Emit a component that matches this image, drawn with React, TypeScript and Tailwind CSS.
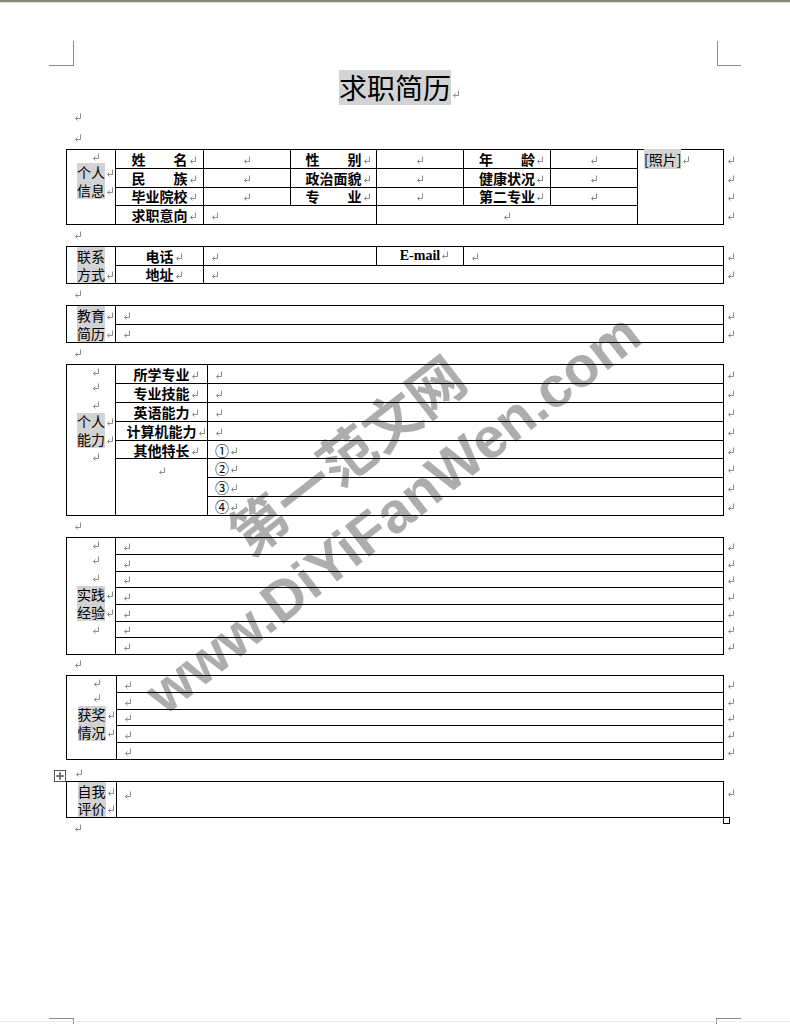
const Mark = ({ className = "" }: { className?: string }) => (
  <svg
    width="8"
    height="9"
    viewBox="0 0 8 9"
    fill="none"
    stroke="#8c8c8c"
    strokeWidth="1"
    className={`inline-block align-baseline ${className}`}
  >
    <path d="M6.5 0.5V5.5H1.5" />
    <path d="M3.5 3.5L1.5 5.5L3.5 7.5" />
  </svg>
);

// takes no width, so centred text ignores the mark the way Word does
const Tail = () => <Mark className="ml-[1px] mr-[-9px]" />;

const Spread = ({ a, b }: { a: string; b: string }) => (
  <span className="inline-flex w-[56px] justify-between font-bold">
    <span>{a}</span>
    <span>{b}</span>
  </span>
);

const Line = ({ cls, text, mark = true }: { cls: string; text?: string; mark?: boolean }) => (
  <div className={`${cls} text-center whitespace-nowrap`}>
    {text && <span className="inline-block bg-[#d3d3d3]">{text}</span>}
    {mark && <Tail />}
  </div>
);

const Para = ({ cls }: { cls: string }) => (
  <div className={`${cls} flex items-center pl-[74px]`}>
    <Mark />
  </div>
);

const End = ({ top = false }: { top?: boolean }) => (
  <td className={`pl-[3px] pr-0 py-0 ${top ? "align-top pt-[3px]" : "align-middle"}`}>
    <Mark />
  </td>
);

const side = "border border-black p-0 align-top";
const label = "border border-black p-0 text-center font-bold whitespace-nowrap";
const mid = "border border-black p-0 text-center";
const left = "border border-black py-0 pl-[7px] pr-0 text-left whitespace-nowrap";

const MoveHandle = () => (
  <svg width="12" height="12" viewBox="0 0 12 12">
    <rect x="0.5" y="0.5" width="11" height="11" fill="white" stroke="#555" />
    <path d="M6 3V9M3 6H9" stroke="#222" />
    <path d="M6 2L4.7 3.6H7.3Z M6 10L4.7 8.4H7.3Z M2 6L3.6 4.7V7.3Z M10 6L8.4 4.7V7.3Z" fill="#222" />
  </svg>
);

export default function App() {
  return (
    <div className="relative isolate h-[1024px] w-[790px] overflow-hidden bg-white font-['Noto_Sans_CJK_SC',sans-serif] text-black">
      <div className="h-[2px] bg-[#85857f]" />
      <div className="h-px bg-[#e2e2da]" />

      {/* watermark, behind the tables */}
      <div className="pointer-events-none absolute left-[369px] top-[483px] -z-10 flex -translate-x-1/2 -translate-y-1/2 -rotate-[38deg] flex-col items-center whitespace-nowrap font-bold text-[#adadad]">
        <div className="text-[56px] leading-[77px]">第一范文网</div>
        <div className="font-['Liberation_Sans',sans-serif] text-[57px] leading-[77px]">www.DiYiFanWen.com</div>
      </div>

      {/* page corner marks */}
      <div className="absolute left-[49px] top-[41px] h-[25px] w-[25px] border-b border-r border-[#8c8c8c]" />
      <div className="absolute left-[717px] top-[41px] h-[25px] w-[24px] border-b border-l border-[#8c8c8c]" />
      <div className="absolute left-[49px] top-[1018px] h-[6px] w-[25px] border-r border-t border-[#8c8c8c]" />
      <div className="absolute left-[716px] top-[1018px] h-[6px] w-[25px] border-l border-t border-[#8c8c8c]" />
      <div className="absolute left-0 top-[1021px] h-px w-full bg-[#ededed]" />

      <div className="h-[67px]" />
      <div className="h-[37px] text-center">
        <span className="inline-block h-[35px] bg-[#d3d3d3] text-[28px] leading-[35px]">求职简历</span>
        <Tail />
      </div>
      <Para cls="h-[21px]" />
      <Para cls="h-[21px]" />

      <div className="text-[14px] leading-[16px]">
        {/* 个人信息 */}
        <div className="pl-[66px]">
          <table className="w-[671px] table-fixed border-collapse">
            <colgroup>
              <col className="w-[49px]" />
              <col className="w-[88px]" />
              <col className="w-[87px]" />
              <col className="w-[86px]" />
              <col className="w-[87px]" />
              <col className="w-[87px]" />
              <col className="w-[87px]" />
              <col className="w-[86px]" />
              <col className="w-[14px]" />
            </colgroup>
            <tbody>
              <tr className="h-[18.75px]">
                <td rowSpan={4} className={side}>
                  <Line cls="h-[13px] leading-[13px]" />
                  <Line cls="h-[18px] leading-[18px]" text="个人" />
                  <Line cls="h-[18px] leading-[18px]" text="信息" />
                </td>
                <td className={label}><Spread a="姓" b="名" /><Tail /></td>
                <td className={mid}><Mark /></td>
                <td className={label}><Spread a="性" b="别" /><Tail /></td>
                <td className={mid}><Mark /></td>
                <td className={label}><Spread a="年" b="龄" /><Tail /></td>
                <td className={mid}><Mark /></td>
                <td rowSpan={4} className="border border-black py-0 pl-[6px] pr-0 align-top whitespace-nowrap leading-[18px]">
                  <span className="bg-[#d3d3d3]">[照片]</span>
                  <Mark className="ml-[1px]" />
                </td>
                <End />
              </tr>
              <tr className="h-[18.75px]">
                <td className={label}><Spread a="民" b="族" /><Tail /></td>
                <td className={mid}><Mark /></td>
                <td className={label}>政治面貌<Tail /></td>
                <td className={mid}><Mark /></td>
                <td className={label}>健康状况<Tail /></td>
                <td className={mid}><Mark /></td>
                <End />
              </tr>
              <tr className="h-[18.75px]">
                <td className={label}>毕业院校<Tail /></td>
                <td className={mid}><Mark /></td>
                <td className={label}><Spread a="专" b="业" /><Tail /></td>
                <td className={mid}><Mark /></td>
                <td className={label}>第二专业<Tail /></td>
                <td className={mid}><Mark /></td>
                <End />
              </tr>
              <tr className="h-[18.75px]">
                <td className={label}>求职意向<Tail /></td>
                <td colSpan={2} className={left}><Mark /></td>
                <td colSpan={3} className={mid}><Mark /></td>
                <End />
              </tr>
            </tbody>
          </table>
        </div>

        <Para cls="h-[21px]" />

        {/* 联系方式 */}
        <div className="pl-[66px]">
          <table className="w-[671px] table-fixed border-collapse">
            <colgroup>
              <col className="w-[49px]" />
              <col className="w-[88px]" />
              <col className="w-[173px]" />
              <col className="w-[87px]" />
              <col className="w-[260px]" />
              <col className="w-[14px]" />
            </colgroup>
            <tbody>
              <tr className="h-[18px]">
                <td rowSpan={2} className={side}>
                  <Line cls="h-[18px] leading-[18px]" text="联系" mark={false} />
                  <Line cls="h-[18px] leading-[18px]" text="方式" />
                </td>
                <td className={label}>电话<Tail /></td>
                <td className={left}><Mark /></td>
                <td className={`${label} font-['Liberation_Serif',serif]`}>E-mail<Tail /></td>
                <td className={left}><Mark /></td>
                <End />
              </tr>
              <tr className="h-[18px]">
                <td className={label}>地址<Tail /></td>
                <td colSpan={3} className={left}><Mark /></td>
                <End />
              </tr>
            </tbody>
          </table>
        </div>

        <Para cls="h-[21px]" />

        {/* 教育简历 */}
        <div className="pl-[66px]">
          <table className="w-[671px] table-fixed border-collapse">
            <colgroup>
              <col className="w-[49px]" />
              <col className="w-[608px]" />
              <col className="w-[14px]" />
            </colgroup>
            <tbody>
              <tr className="h-[18px]">
                <td rowSpan={2} className={side}>
                  <Line cls="h-[18px] leading-[18px]" text="教育" />
                  <Line cls="h-[18px] leading-[18px]" text="简历" />
                </td>
                <td className={left}><Mark /></td>
                <End />
              </tr>
              <tr className="h-[18px]">
                <td className={left}><Mark /></td>
                <End />
              </tr>
            </tbody>
          </table>
        </div>

        <Para cls="h-[21px]" />

        {/* 个人能力 */}
        <div className="pl-[66px]">
          <table className="w-[671px] table-fixed border-collapse">
            <colgroup>
              <col className="w-[49px]" />
              <col className="w-[92px]" />
              <col className="w-[516px]" />
              <col className="w-[14px]" />
            </colgroup>
            <tbody>
              <tr className="h-[18.9px]">
                <td rowSpan={8} className={side}>
                  <Line cls="h-[13px] leading-[13px]" />
                  <Line cls="h-[17.5px] leading-[17.5px]" />
                  <Line cls="h-[17.5px] leading-[17.5px]" />
                  <Line cls="h-[17.5px] leading-[17.5px]" text="个人" />
                  <Line cls="h-[17.5px] leading-[17.5px]" text="能力" />
                  <Line cls="h-[17.5px] leading-[17.5px]" />
                </td>
                <td className={label}>所学专业<Tail /></td>
                <td className={left}><Mark /></td>
                <End />
              </tr>
              <tr className="h-[18.9px]">
                <td className={label}>专业技能<Tail /></td>
                <td className={left}><Mark /></td>
                <End />
              </tr>
              <tr className="h-[18.9px]">
                <td className={label}>英语能力<Tail /></td>
                <td className={left}><Mark /></td>
                <End />
              </tr>
              <tr className="h-[18.9px]">
                <td className={label}>计算机能力<Tail /></td>
                <td className={left}><Mark /></td>
                <End />
              </tr>
              <tr className="h-[18.9px]">
                <td className={label}>其他特长<Tail /></td>
                <td className={left}>①<Mark className="ml-[1px]" /></td>
                <End />
              </tr>
              <tr className="h-[18.9px]">
                <td rowSpan={3} className={`${mid} align-top pt-[3px]`}><Mark /></td>
                <td className={left}>②<Mark className="ml-[1px]" /></td>
                <End />
              </tr>
              <tr className="h-[18.9px]">
                <td className={left}>③<Mark className="ml-[1px]" /></td>
                <End />
              </tr>
              <tr className="h-[18.9px]">
                <td className={left}>④<Mark className="ml-[1px]" /></td>
                <End />
              </tr>
            </tbody>
          </table>
        </div>

        <Para cls="h-[21px]" />

        {/* 实践经验 */}
        <div className="pl-[66px] leading-[14px]">
          <table className="w-[671px] table-fixed border-collapse">
            <colgroup>
              <col className="w-[49px]" />
              <col className="w-[608px]" />
              <col className="w-[14px]" />
            </colgroup>
            <tbody>
              <tr className="h-[16.7px]">
                <td rowSpan={7} className={side}>
                  <Line cls="h-[13px] leading-[13px]" />
                  <Line cls="h-[17.5px] leading-[17.5px]" />
                  <Line cls="h-[17.5px] leading-[17.5px]" />
                  <Line cls="h-[17.5px] leading-[17.5px]" text="实践" />
                  <Line cls="h-[17.5px] leading-[17.5px]" text="经验" />
                  <Line cls="h-[17.5px] leading-[17.5px]" />
                </td>
                <td className={left}><Mark /></td>
                <End />
              </tr>
              {[0, 1, 2, 3, 4, 5].map((i) => (
                <tr key={i} className="h-[16.7px]">
                  <td className={left}><Mark /></td>
                  <End />
                </tr>
              ))}
            </tbody>
          </table>
        </div>

        <Para cls="h-[20px]" />

        {/* 获奖情况 */}
        <div className="pl-[66px] leading-[14px]">
          <table className="w-[671px] table-fixed border-collapse">
            <colgroup>
              <col className="w-[50px]" />
              <col className="w-[607px]" />
              <col className="w-[14px]" />
            </colgroup>
            <tbody>
              <tr className="h-[16.8px]">
                <td rowSpan={5} className={side}>
                  <Line cls="h-[13px] leading-[13px]" />
                  <Line cls="h-[17.5px] leading-[17.5px]" />
                  <Line cls="h-[17.5px] leading-[17.5px]" text="获奖" />
                  <Line cls="h-[17.5px] leading-[17.5px]" text="情况" />
                </td>
                <td className={left}><Mark /></td>
                <End />
              </tr>
              {[0, 1, 2, 3].map((i) => (
                <tr key={i} className="h-[16.8px]">
                  <td className={left}><Mark /></td>
                  <End />
                </tr>
              ))}
            </tbody>
          </table>
        </div>

        <div className="flex h-[21px] items-start pl-[54px]">
          <div className="mt-[10px] flex">
            <MoveHandle />
          </div>
          <div className="ml-[9px] mt-[9px] flex">
            <Mark />
          </div>
        </div>

        {/* 自我评价 */}
        <div className="pl-[66px]">
          <div className="relative w-[671px]">
            <table className="w-[671px] table-fixed border-collapse">
              <colgroup>
                <col className="w-[50px]" />
                <col className="w-[607px]" />
                <col className="w-[14px]" />
              </colgroup>
              <tbody>
                <tr className="h-[35px]">
                  <td className={side}>
                    <Line cls="h-[18px] leading-[18px]" text="自我" />
                    <Line cls="h-[17px] leading-[17px]" text="评价" />
                  </td>
                  <td className={`${left} align-top pt-[4px]`}><Mark /></td>
                  <End top />
                </tr>
              </tbody>
            </table>
            <div className="absolute left-[657px] top-[36px] h-[7px] w-[7px] border border-black bg-white" />
          </div>
        </div>

        <Para cls="h-[22px]" />
      </div>
    </div>
  );
}
